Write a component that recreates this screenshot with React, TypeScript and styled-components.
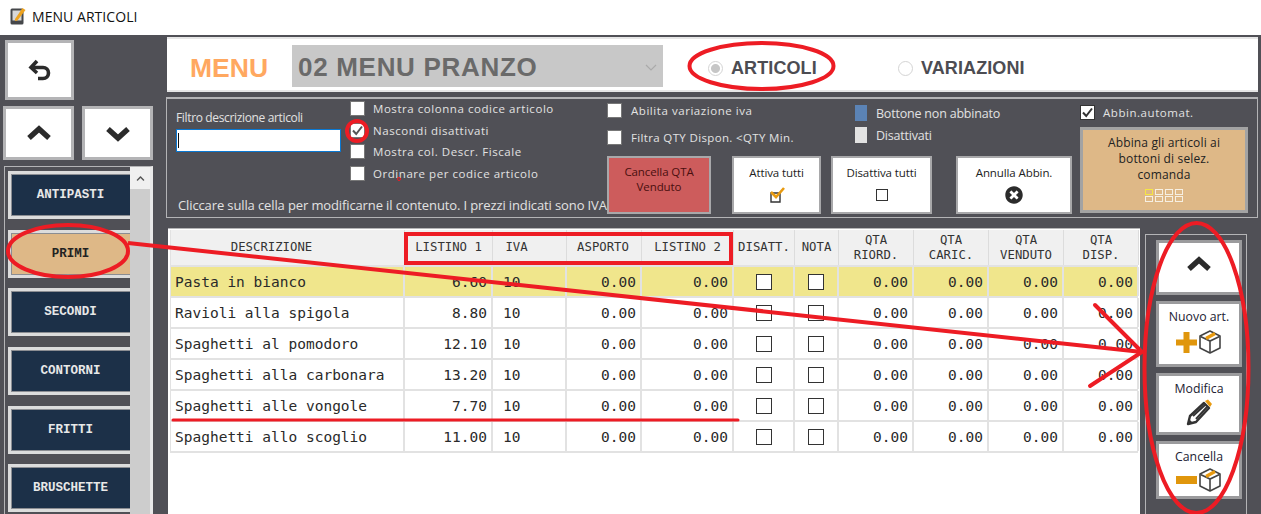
import React from "react";
import styled, { createGlobalStyle } from "styled-components";
import { FaChevronUp, FaTimesCircle } from "react-icons/fa";

const GlobalStyle = createGlobalStyle`
    html, body { margin: 0; padding: 0; background: #fff; }
    body { width: 1261px; height: 514px; overflow: hidden; font-family: "Open Sans", "Liberation Sans", sans-serif; }
`

const Page = styled.div`
    position: relative;
    width: 1261px;
    height: 514px;
    overflow: hidden;
    display: flex;
    flex-direction: column;
`

const TitleBar = styled.div`
    height: 35px;
    flex: none;
    display: flex;
    align-items: center;
    padding: 0 0 3px 10px;
    box-sizing: border-box;
    gap: 6px;
    background: #fff;
    font-size: 14px;
    letter-spacing: 0.05px;
    color: #111;
`

const Body = styled.div`
    flex: 1;
    min-height: 0;
    display: flex;
    background: #505056;
`

const Sidebar = styled.div`
    width: 167px;
    flex: none;
    display: flex;
    flex-direction: column;
    padding: 5px 0 0 4px;
    box-sizing: border-box;
`

const NavButton = styled.button<{ $w: number; $h: number }>`
    width: ${({ $w }) => $w}px;
    height: ${({ $h }) => $h}px;
    padding: 0;
    box-sizing: border-box;
    background: #fff;
    border: 3px solid #b4b4b6;
    color: #2b2b2b;
    display: flex;
    align-items: center;
    justify-content: center;
`

const BackSlot = styled.div`
    padding-left: 1px;
`

const NavRow = styled.div`
    display: flex;
    gap: 8px;
    margin: 6px 0 6px -1px;
`

const ListPanel = styled.div`
    width: 149px;
    flex: 1;
    box-sizing: border-box;
    border: 1px solid #b4b4b6;
    border-bottom: 0;
    border-right: 3px solid #e8e8e8;
    display: flex;
    padding-left: 3px;
`

const CategoryColumn = styled.div`
    width: 122px;
    flex: none;
    display: flex;
    flex-direction: column;
    gap: 10.7px;
    padding-top: 4px;
`

const CategoryButton = styled.div<{ $active?: boolean }>`
    height: 48px;
    flex: none;
    box-sizing: border-box;
    border: 3px solid #dcdcdc;
    border-right: 0;
    box-shadow: inset 1px 1px 0 #8b8d92, inset 0 -1px 0 #8b8d92;
    background: ${({ $active }) => ($active ? "#DEB887" : "#1C3048")};
    color: ${({ $active }) => ($active ? "#222" : "#e8e8e8")};
    font: bold 12.5px "Liberation Mono", monospace;
    display: flex;
    align-items: center;
    justify-content: center;
`

const ScrollBar = styled.div`
    width: 20px;
    flex: none;
    background: #cdcdcd;
`

const ScrollArrow = styled.div`
    height: 22px;
    background: #f0f0f0;
    color: #555;
    display: flex;
    align-items: center;
    justify-content: center;
`

const Main = styled.div`
    flex: 1;
    min-width: 0;
    display: flex;
    flex-direction: column;
`

const HeaderPanel = styled.div`
    margin: 2px 3px 0 0;
    height: 55px;
    flex: none;
    box-sizing: border-box;
    background: #fff;
    border-top: 2px solid #e6e6e6;
    border-bottom: 2px solid #e6e6e6;
    display: flex;
    align-items: center;
    font-family: "Liberation Sans", Arial, sans-serif;
    font-weight: bold;
`

const MenuLabel = styled.div`
    width: 125px;
    padding-left: 23px;
    margin-top: 7px;
    box-sizing: border-box;
    font-size: 26.5px;
    color: #ffa860;
    flex: none;
`

const MenuSelect = styled.div`
    width: 371px;
    height: 42px;
    flex: none;
    margin-top: 3px;
    box-sizing: border-box;
    padding: 3px 6px 0;
    background: #c8c8c8;
    color: #6a6a6a;
    font-size: 26px;
    letter-spacing: 0.7px;
    display: flex;
    align-items: center;
    justify-content: space-between;
`

const RadioItem = styled.div<{ $ml: number; $w: number }>`
    margin-left: ${({ $ml }) => $ml}px;
    width: ${({ $w }) => $w}px;
    flex: none;
    margin-top: 7px;
    display: flex;
    align-items: center;
    gap: 8px;
    font-size: 18px;
    letter-spacing: 0.1px;
    color: #4c4c52;
`

const RadioCircle = styled.span<{ $on?: boolean }>`
    width: 15px;
    height: 15px;
    flex: none;
    box-sizing: border-box;
    border-radius: 50%;
    border: 1px solid #d4d4d4;
    background: ${({ $on }) => ($on ? "radial-gradient(circle, #c6c6c6 0 4px, #fff 5px)" : "#fff")};
`

const FilterPanel = styled.div`
    margin: 5px 3px 0 -1px;
    height: 121px;
    flex: none;
    box-sizing: border-box;
    border: 1px solid #b4b4b6;
    border-top-width: 2px;
    display: flex;
    color: #e2e2e2;
    font-size: 11.5px;
`

const LeftBlock = styled.div`
    width: 440px;
    flex: none;
    display: flex;
    flex-direction: column;
`

const LeftTop = styled.div`
    display: flex;
    height: 93px;
`

const FilterField = styled.div`
    width: 183px;
    flex: none;
    padding: 10px 0 0 9px;
    box-sizing: border-box;
    font-size: 12px;
`

const FilterLabel = styled.div`
    letter-spacing: -0.35px;
    height: 20px;
`

const FilterInput = styled.div`
    width: 165px;
    height: 23px;
    box-sizing: border-box;
    background: #fff;
    border: 1px solid #0a78d2;
    padding: 3px 1px;
    &::before {
        content: "";
        display: block;
        width: 1px;
        height: 15px;
        background: #111;
    }
`

const CheckColumn = styled.div`
    margin-top: -1px;
`

const CheckRow = styled.div<{ $h: number; $gap: number; $ls?: number }>`
    height: ${({ $h }) => $h}px;
    display: flex;
    align-items: center;
    gap: ${({ $gap }) => $gap}px;
    letter-spacing: ${({ $ls }) => $ls ?? 0.55}px;
    white-space: nowrap;
`

const CheckBox = styled.span<{ $size?: number; $dark?: boolean }>`
    width: ${({ $size }) => $size ?? 15}px;
    height: ${({ $size }) => $size ?? 15}px;
    flex: none;
    box-sizing: border-box;
    background: #fff;
    border: 1px solid ${({ $dark }) => ($dark ? "#333" : "#777")};
    display: inline-flex;
    align-items: center;
    justify-content: center;
`

const NoteText = styled.div`
    padding-left: 11px;
    margin-top: 4px;
    font-size: 13px;
    letter-spacing: -0.12px;
    white-space: nowrap;
`

const MidBlock = styled.div`
    width: 466px;
    flex: none;
    display: flex;
    flex-direction: column;
`

const MidTop = styled.div`
    display: flex;
    height: 57px;
`

const MidChecks = styled.div`
    width: 248px;
    flex: none;
    margin-top: -2px;
`

const Legend = styled.div`
    padding-top: 3px;
    font-size: 12.5px;
    letter-spacing: -0.2px;
`

const LegendRow = styled.div`
    height: 22px;
    display: flex;
    align-items: center;
    gap: 9px;
`

const Swatch = styled.span<{ $color: string }>`
    width: 12px;
    height: 16px;
    background: ${({ $color }) => $color};
`

const ActionRow = styled.div`
    display: flex;
    height: 58px;
`

const ActionButton = styled.div<{ $w: number; $ml?: number; $red?: boolean }>`
    width: ${({ $w }) => $w}px;
    margin-left: ${({ $ml }) => $ml ?? 0}px;
    flex: none;
    box-sizing: border-box;
    border: 2px solid #a8a8aa;
    background: ${({ $red }) => ($red ? "#CD5C5C" : "#fff")};
    color: ${({ $red }) => ($red ? "#4a0f0f" : "#222")};
    font-size: 11.5px;
    line-height: 15px;
    text-align: center;
    padding-top: ${({ $red }) => ($red ? 6 : 7)}px;
    letter-spacing: -0.1px;
`

const ActionIcon = styled.div`
    height: 24px;
    margin-top: 3px;
    display: flex;
    align-items: center;
    justify-content: center;
`

const RightBlock = styled.div`
    width: 168px;
    flex: none;
    margin-left: 7px;
    padding-top: 4px;
`

const AutoRow = styled.div`
    height: 18px;
    display: flex;
    align-items: center;
    gap: 8px;
    letter-spacing: 0.55px;
`

const PairButton = styled.div`
    margin-top: 6px;
    height: 86px;
    box-sizing: border-box;
    border: 3px solid #a3a3a3;
    background: #DEB887;
    color: #222;
    font-size: 12px;
    line-height: 16px;
    text-align: center;
    padding-top: 5px;
    letter-spacing: 0.15px;
`

const MiniGrid = styled.div`
    display: grid;
    grid-template-columns: repeat(4, 8px);
    grid-auto-rows: 6px;
    gap: 1px 2px;
    justify-content: center;
    margin-top: 6px;
`

const MiniCell = styled.span<{ $on?: boolean }>`
    border: 1px solid ${({ $on }) => ($on ? "#f5e642" : "#f6efe2")};
`

const LowerRow = styled.div`
    flex: 1;
    min-height: 0;
    margin-top: 10px;
    display: flex;
`

const TableArea = styled.div`
    margin-left: 1px;
    width: 972px;
    flex: none;
    box-sizing: border-box;
    padding: 1px 0 0 2px;
    background: #fff;
    border-top: 1px solid #b4b4b6;
`

const GridRow = styled.div<{ $head?: boolean; $hl?: boolean }>`
    width: 968px;
    height: ${({ $head }) => ($head ? 37 : 31)}px;
    display: grid;
    grid-template-columns: 234px 88px 74px 75px 92px 61px 44px 75px 75px 75px 75px;
    background: ${({ $head, $hl }) => ($head ? "#f0f0f0" : $hl ? "#F0E68C" : "#fff")};
    box-sizing: border-box;
    border-bottom: 2px solid #e2e2e2;
    border-left: 1px solid #e2e2e2;
    font-family: "DejaVu Sans Mono", monospace;
`

const HeadCell = styled.div<{ $shift?: number }>`
    border-right: 1px solid #dcdcdc;
    font-size: 12.3px;
    line-height: 15px;
    color: #333;
    text-align: center;
    display: flex;
    align-items: center;
    justify-content: center;
    box-sizing: border-box;
    padding-right: ${({ $shift }) => $shift ?? 0}px;
`

const Cell = styled.div<{ $align?: string; $pl?: number }>`
    border-right: 2px solid #e2e2e2;
    font-size: 14.5px;
    color: #2a2a2a;
    display: flex;
    align-items: center;
    padding: 0 4px 0 ${({ $pl }) => $pl ?? 4}px;
    box-sizing: border-box;
    justify-content: ${({ $align }) => $align ?? "flex-start"};
`

const SidePanel = styled.div`
    width: 102px;
    flex: none;
    margin: 6px 0 0 5px;
    box-sizing: border-box;
    border: 1px solid #b4b4b6;
    border-bottom: 0;
    padding: 5px 0 0 10px;
    display: flex;
    flex-direction: column;
    gap: 6px;
`

const SideButton = styled.div<{ $h: number }>`
    width: 86px;
    height: ${({ $h }) => $h}px;
    flex: none;
    box-sizing: border-box;
    border: 3px solid #9b9b9d;
    background: #fff;
    color: #223;
    font-size: 12.3px;
    text-align: center;
    padding-top: 4px;
    display: flex;
    flex-direction: column;
    align-items: center;
`

const SideIcon = styled.div<{ $mt?: number }>`
    margin-top: ${({ $mt }) => $mt ?? 2}px;
    display: flex;
    align-items: center;
    gap: 1px;
`

const Overlay = styled.svg`
    position: absolute;
    left: 0;
    top: 0;
    width: 1261px;
    height: 514px;
    pointer-events: none;
`

const AppIcon = () => (
    <svg width="16" height="18" viewBox="0 0 16 18">
        <rect x="0.5" y="1.5" width="13" height="16" rx="1.5" fill="#45474a" />
        <rect x="2.5" y="3.5" width="9" height="10" fill="#d8d8d8" />
        <path d="M5 12 L12.5 1 L15.5 3 L7.5 13.5 L5 14 Z" fill="#eda320" />
    </svg>
)

const BackIcon = () => (
    <svg width="24" height="24" viewBox="0 0 24 24" fill="none" stroke="#2b2b2b" strokeWidth="3.6">
        <path d="M9 3 L3 9.5 L9 15" />
        <path d="M3.5 9.5 H15 A5.5 5.5 0 0 1 15 20.5 H10" />
    </svg>
)

const Chevron = ({ down }: { down?: boolean }) => (
    <svg width="26" height="17" viewBox="0 0 26 17" fill="none" stroke="#2b2b2b" strokeWidth="5.4">
        <path d={down ? "M3 4 L13 13 L23 4" : "M3 13 L13 4 L23 13"} />
    </svg>
)

const SmallCheck = ({ color = "#555" }: { color?: string }) => (
    <svg width="13" height="13" viewBox="0 0 13 13" fill="none" stroke={color} strokeWidth="2">
        <path d="M2 6.5 L5.2 10 L11 2.5" />
    </svg>
)

const ActivateIcon = () => (
    <svg width="18" height="18" viewBox="0 0 18 18" fill="none">
        <path d="M3 7 H12 V16 H3 Z" stroke="#333" strokeWidth="1.4" />
        <path d="M3 6 L8 11 L16 2" stroke="#e89a10" strokeWidth="2.6" />
    </svg>
)

const BoxIcon = () => (
    <svg width="24" height="26" viewBox="0 0 24 26" fill="none">
        <path d="M12 2 L22 7 V19 L12 24 L2 19 V7 Z" stroke="#444" strokeWidth="1.6" strokeLinejoin="round" />
        <path d="M2.5 7.5 L12 12 L21.5 7.5 M12 12 V24" stroke="#444" strokeWidth="1.6" />
        <path d="M8 9.5 L17 4.5" stroke="#e89a10" strokeWidth="3.2" />
    </svg>
)

const PlusIcon = () => (
    <svg width="21" height="21" viewBox="0 0 21 21">
        <path d="M7.5 0 H13.5 V7.5 H21 V13.5 H13.5 V21 H7.5 V13.5 H0 V7.5 H7.5 Z" fill="#e0960c" />
    </svg>
)

const MinusIcon = () => (
    <svg width="21" height="8" viewBox="0 0 21 8">
        <rect width="21" height="8" fill="#e0960c" />
    </svg>
)

const PencilIcon = () => (
    <svg width="27" height="27" viewBox="0 0 27 27">
        <path d="M2 25 L4 17 L18 4 L23 9 L10 23 Z" fill="none" stroke="#333" strokeWidth="2.4" strokeLinejoin="round" />
        <path d="M7 17 L19 6 M10 20 L21 8" stroke="#333" strokeWidth="2" />
        <path d="M2 25 L3 20 L7 24 Z" fill="#333" />
        <path d="M19 2 L22 0.5 L26 5 L24 8 Z" fill="#e89a10" />
    </svg>
)

const categories = ["ANTIPASTI", "PRIMI", "SECONDI", "CONTORNI", "FRITTI", "BRUSCHETTE"]

const headers = [
    { text: "DESCRIZIONE", shift: 32 },
    { text: "LISTINO 1" },
    { text: "IVA", shift: 26 },
    { text: "ASPORTO", shift: 2 },
    { text: "LISTINO 2" },
    { text: "DISATT." },
    { text: "NOTA" },
    { text: "QTA\nRIORD." },
    { text: "QTA\nCARIC." },
    { text: "QTA\nVENDUTO" },
    { text: "QTA\nDISP." },
]

const rows = [
    ["Pasta in bianco", "6.60"],
    ["Ravioli alla spigola", "8.80"],
    ["Spaghetti al pomodoro", "12.10"],
    ["Spaghetti alla carbonara", "13.20"],
    ["Spaghetti alle vongole", "7.70"],
    ["Spaghetti allo scoglio", "11.00"],
]

const App = () => {
    return (
        <Page>
            <GlobalStyle />
            <TitleBar>
                <AppIcon />
                MENU ARTICOLI
            </TitleBar>
            <Body>
                <Sidebar>
                    <BackSlot>
                        <NavButton $w={69} $h={60}><BackIcon /></NavButton>
                    </BackSlot>
                    <NavRow>
                        <NavButton $w={71} $h={54}><Chevron /></NavButton>
                        <NavButton $w={71} $h={54}><Chevron down /></NavButton>
                    </NavRow>
                    <ListPanel>
                        <CategoryColumn>
                            {categories.map((c) => (
                                <CategoryButton key={c} $active={c === "PRIMI"}>{c}</CategoryButton>
                            ))}
                        </CategoryColumn>
                        <ScrollBar>
                            <ScrollArrow><FaChevronUp size={9} /></ScrollArrow>
                        </ScrollBar>
                    </ListPanel>
                </Sidebar>
                <Main>
                    <HeaderPanel>
                        <MenuLabel>MENU</MenuLabel>
                        <MenuSelect>
                            02 MENU PRANZO
                            <svg width="12" height="7" viewBox="0 0 12 7" fill="none" stroke="#aaa" strokeWidth="1.2">
                                <path d="M1 1 L6 6 L11 1" />
                            </svg>
                        </MenuSelect>
                        <RadioItem $ml={45} $w={190}><RadioCircle $on />ARTICOLI</RadioItem>
                        <RadioItem $ml={0} $w={140}><RadioCircle />VARIAZIONI</RadioItem>
                    </HeaderPanel>
                    <FilterPanel>
                        <LeftBlock>
                            <LeftTop>
                                <FilterField>
                                    <FilterLabel>Filtro descrizione articoli</FilterLabel>
                                    <FilterInput />
                                </FilterField>
                                <CheckColumn>
                                    <CheckRow $h={21.5} $gap={8}><CheckBox $size={15} />Mostra colonna codice articolo</CheckRow>
                                    <CheckRow $h={21.5} $gap={8}><CheckBox $size={15}><SmallCheck /></CheckBox>Nascondi disattivati</CheckRow>
                                    <CheckRow $h={21.5} $gap={8}><CheckBox $size={15} />Mostra col. Descr. Fiscale</CheckRow>
                                    <CheckRow $h={21.5} $gap={8}><CheckBox $size={15} />Ordinare per codice articolo</CheckRow>
                                </CheckColumn>
                            </LeftTop>
                            <NoteText>Cliccare sulla cella per modificarne il contenuto. I prezzi indicati sono IVA</NoteText>
                        </LeftBlock>
                        <MidBlock>
                            <MidTop>
                                <MidChecks>
                                    <CheckRow $h={27} $gap={9}><CheckBox />Abilita variazione iva</CheckRow>
                                    <CheckRow $h={27} $gap={9} $ls={0.35}><CheckBox />Filtra QTY Dispon. &lt;QTY Min.</CheckRow>
                                </MidChecks>
                                <Legend>
                                    <LegendRow><Swatch $color="#5b83b5" />Bottone non abbinato</LegendRow>
                                    <LegendRow><Swatch $color="#e2e2e2" />Disattivati</LegendRow>
                                </Legend>
                            </MidTop>
                            <ActionRow>
                                <ActionButton $w={104} $red>Cancella QTA<br />Venduto</ActionButton>
                                <ActionButton $w={89} $ml={21}>
                                    Attiva tutti
                                    <ActionIcon><ActivateIcon /></ActionIcon>
                                </ActionButton>
                                <ActionButton $w={101} $ml={10}>
                                    Disattiva tutti
                                    <ActionIcon><CheckBox $size={12} $dark /></ActionIcon>
                                </ActionButton>
                                <ActionButton $w={116} $ml={24}>
                                    Annulla Abbin.
                                    <ActionIcon><FaTimesCircle size={18} color="#2b2b2b" /></ActionIcon>
                                </ActionButton>
                            </ActionRow>
                        </MidBlock>
                        <RightBlock>
                            <AutoRow><CheckBox $size={15} $dark><SmallCheck color="#333" /></CheckBox>Abbin.automat.</AutoRow>
                            <PairButton>
                                Abbina gli articoli ai<br />bottoni di selez.<br />comanda
                                <MiniGrid>
                                    {Array.from({ length: 8 }, (_, i) => <MiniCell key={i} $on={i === 0} />)}
                                </MiniGrid>
                            </PairButton>
                        </RightBlock>
                    </FilterPanel>
                    <LowerRow>
                        <TableArea>
                            <GridRow $head>
                                {headers.map((h) => (
                                    <HeadCell key={h.text} $shift={h.shift}>
                                        <span>{h.text.split("\n").map((l, i) => <React.Fragment key={l}>{i > 0 && <br />}{l}</React.Fragment>)}</span>
                                    </HeadCell>
                                ))}
                            </GridRow>
                            {rows.map(([name, price], i) => (
                                <GridRow key={name} $hl={i === 0}>
                                    <Cell>{name}</Cell>
                                    <Cell $align="flex-end">{price}</Cell>
                                    <Cell $pl={10}>10</Cell>
                                    <Cell $align="flex-end">0.00</Cell>
                                    <Cell $align="flex-end">0.00</Cell>
                                    <Cell $align="center"><CheckBox $size={16} $dark /></Cell>
                                    <Cell $align="center"><CheckBox $size={16} $dark /></Cell>
                                    <Cell $align="flex-end">0.00</Cell>
                                    <Cell $align="flex-end">0.00</Cell>
                                    <Cell $align="flex-end">0.00</Cell>
                                    <Cell $align="flex-end">0.00</Cell>
                                </GridRow>
                            ))}
                        </TableArea>
                        <SidePanel>
                            <SideButton $h={55}>
                                <SideIcon $mt={9}><Chevron /></SideIcon>
                            </SideButton>
                            <SideButton $h={66}>
                                Nuovo art.
                                <SideIcon $mt={4}><PlusIcon /><BoxIcon /></SideIcon>
                            </SideButton>
                            <SideButton $h={62}>
                                Modifica
                                <SideIcon><PencilIcon /></SideIcon>
                            </SideButton>
                            <SideButton $h={58}>
                                Cancella
                                <SideIcon><MinusIcon /><BoxIcon /></SideIcon>
                            </SideButton>
                        </SidePanel>
                    </LowerRow>
                </Main>
            </Body>
            <Overlay viewBox="0 0 1261 514" fill="none" stroke="#ED1C24" strokeWidth="4">
                <ellipse cx="761.5" cy="66" rx="72" ry="23" />
                <ellipse cx="68" cy="251" rx="60" ry="26" />
                <ellipse cx="1196.5" cy="368" rx="52" ry="145" />
                <circle cx="357" cy="131" r="10" />
                <circle cx="399" cy="179" r="1.5" strokeWidth="1" />
                <rect x="406" y="234" width="325" height="29" />
                <path d="M128 243 L1142 352" />
                <path d="M1095 305 L1142 352 L1090 386" strokeLinecap="round" />
                <path d="M173 420 L738 420" strokeWidth="3" strokeLinecap="round" />
            </Overlay>
        </Page>
    )
}

export default App
